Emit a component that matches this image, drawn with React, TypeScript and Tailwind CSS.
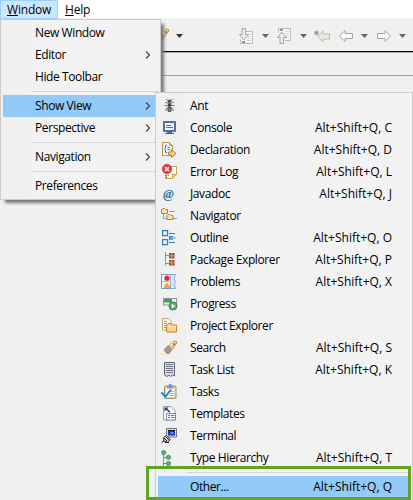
import React from "react";

type Entry = { label: string; keys?: string; sub?: boolean; icon?: React.ReactNode };

const Ic = ({ children }: { children: React.ReactNode }) => (
  <svg width="16" height="16" viewBox="0 0 16 16" className="block shrink-0 overflow-visible">{children}</svg>
);

const Ant = () => (
  <Ic>
    <path d="M6 2.500 4.500 1M9 2.500 10.500 1M6.500 6 4.500 4.500H3M8.500 6l2-1.500H12M6.500 7.500h-4M8.500 7.500h4M6.500 9l-2 1.500-1 2.500M8.500 9l2 1.500 1 2.500" fill="none" stroke="#777" />
    <ellipse cx="7.500" cy="3.300" rx="2" ry="1.700" fill="#555" />
    <ellipse cx="7.500" cy="7" rx="1.800" ry="2" fill="#444" />
    <ellipse cx="7.500" cy="11.500" rx="2.200" ry="2.700" fill="#555" />
    <path d="M7 10.500h1v2H7z" fill="#bbb" />
  </Ic>
);
const Console = () => (
  <Ic>
    <rect x="1" y="1" width="13" height="11" rx="1" fill="#4a72a8" />
    <rect x="3" y="3" width="9" height="7" fill="#f6f8fc" />
    <path d="M4 5.500h5M4 7.500h7" stroke="#5f7194" />
    <path d="M5 12h5v1h2v1H3v-1h2z" fill="#3f659b" />
  </Ic>
);
const Declaration = () => (
  <Ic>
    <path d="M.5.500h7l3 3v10H.500z" fill="#f3f7fd" stroke="#b8964a" />
    <path d="M7.500.500v3h3" fill="#e4c57d" stroke="#b8964a" />
    <path d="M5 3.500H3.500v2.500l-1 1 1 1v2.500H5M5.500 5.500H8M5.500 7.500H8" fill="none" stroke="#477aa8" />
    <path d="M6.500 10h3V7.500l4.500 4-4.500 4V13h-3z" fill="#f7d37d" stroke="#b98535" />
  </Ic>
);
const ErrorLog = () => (
  <Ic>
    <path d="M6.500 2.500h8v8l-4 4h-6v-4" fill="#fbfaf0" stroke="#c0a050" />
    <path d="M10.500 14.500v-4h4" fill="#ecd998" stroke="#c0a050" />
    <circle cx="5" cy="5" r="4.700" fill="#e3303d" stroke="#c9212f" strokeWidth=".6" />
    <path d="m3 3 4 4m0-4L3 7" stroke="#ffd9dc" strokeWidth="1.800" />
    <path d="M3 11h1.500v1H3zM5.500 11H7v1H5.500zM3 13h1.500v1.500H3z" fill="#4a76ae" />
  </Ic>
);
const Javadoc = () => (
  <span className="block w-4 pl-[1px] font-['Liberation_Serif',serif] text-[13px] leading-4 font-bold italic tracking-normal text-[#3474a8]">@</span>
);
const Folder = ({ x, y }: { x: number; y: number }) => (
  <path d={`M${x} ${y + 1}l1-1h2l1 1h2v4h-6z`} fill="#fbe4a8" stroke="#bd8137" />
);
const Navigator = () => (
  <Ic>
    <path d="M1.500 6v4.500H5M7 3.500h6M11 10.500h4" fill="none" stroke="#7da7cd" />
    <Folder x={-0.5} y={0.5} />
    <Folder x={5} y={6.5} />
  </Ic>
);
const Outline = () => (
  <Ic>
    <g fill="#e3f1ff" stroke="#2e7cbb" strokeWidth="1.200">
      <path d="M.600.600h5v5h-5zM.600 9.600h5v5h-5zM7.600 6.600h2.500v2.500H7.600z" />
      <path d="M7 3.500h6M7 12.500h6M11.500 8h2" />
    </g>
  </Ic>
);
const PackageExplorer = () => (
  <Ic>
    <path d="M3.500 0v13.500M3.500 3.500H7M3.500 11.500H7" fill="none" stroke="#8493a2" />
    <path d="M7 1h5.500v5.500H7zM7 8h5.500v5.500H7z" fill="#9b572e" />
    <path d="M7 3.700h5.500M9.700 1v5.500M7 10.700h5.500M9.700 8v5.500" stroke="#e0a871" strokeWidth=".8" />
  </Ic>
);
const Problems = () => (
  <Ic>
    <path d="M-.5.500h9v14h-9z" fill="#eef5ff" stroke="#7894ba" />
    <path d="M8.500.500h5l-1.500 4 1.500 4-1.500 2 1.500 4h-5z" fill="#dbe7f6" stroke="#8aa6ca" />
    <path d="M0 7.500h9" stroke="#a9bdd7" />
    <circle cx="5" cy="4.200" r="2.600" fill="#e12732" />
    <path d="M2 14v-2l3-3.500L8 12v2z" fill="#f3a63c" />
  </Ic>
);
const Progress = () => (
  <Ic>
    <rect x="1.500" y="2.500" width="13" height="6.500" fill="#e9eee8" stroke="#8b9c90" />
    <path d="M2 3h8v3.500H2z" fill="#4a9a5d" />
    <circle cx="11" cy="10" r="4" fill="#5aae70" stroke="#398450" />
    <path d="m9.700 7.700 3.700 2.300-3.700 2.300z" fill="#fff" />
  </Ic>
);
const ProjectExplorer = () => (
  <Ic>
    <path d="M.500.500h6l3 3v8.500h-9z" fill="#f7f5ea" stroke="#b9a877" />
    <path d="M2 3.500h3M2 5.500h3M2 7.500h2M2 9.500h2" stroke="#8ba4be" />
    <path d="M4.500 7.500 6 5.500h3l1 1.500h4.500v7h-10z" fill="#fbd582" stroke="#c08337" />
    <path d="M5.500 8.500h8.500" stroke="#fff0bd" />
  </Ic>
);
const Search = () => (
  <Ic>
    <path d="M-1 14 3 8.500l4.500 4-5 2z" fill="#fff6c4" stroke="#f3d98a" strokeWidth=".6" />
    <path d="m2.500 9 3.500-3 4 3.500-3 4q-4 .5-4.500-4.500z" fill="#a39a98" stroke="#81736c" strokeWidth=".7" />
    <path d="m6.500 6 4.500-4.500q4-1.500 4 1.500L10 9.500z" fill="#f4c677" stroke="#b97c38" strokeWidth=".8" />
    <path d="m8.500 5.500 4-3.500" stroke="#fff0c6" strokeWidth="1.400" />
    <circle cx="12" cy="4" r="1" fill="#45617d" />
  </Ic>
);
const TaskList = () => (
  <Ic>
    <path d="M2.500.500h10v13.500l-2-1-1.700 1.500-1.800-1.500-2 1.500-2.500-1.500z" fill="#d9daeb" stroke="#62636e" />
    <path d="M4 2.500h7M4 4.500h7M4 6.500h7M4 8.500h7M4 10.500h7" stroke="#73758b" />
  </Ic>
);
const Tasks = () => (
  <Ic>
    <rect x="2.500" y="2" width="11.500" height="12.500" rx="1" fill="#e9cfa0" stroke="#ad9468" />
    <path d="M4 4h8.500v9H4z" fill="#f5f9ff" />
    <path d="M5 2h1.500l.5-2h2.500l.500 2h1.500v2.500H5z" fill="#8797ab" />
    <path d="M8 7.500h4M8 9.500h4M7 11.500h5" stroke="#a8b8d2" />
    <path d="m-.5 8.500 4 4L9 5.500" fill="none" stroke="#1e83c8" strokeWidth="2" />
  </Ic>
);
const Templates = () => (
  <Ic>
    <path d="M1.500.500h7.500l4 4v9.500h-11.500z" fill="#f6f9ff" stroke="#8b9db5" />
    <path d="M2.500 5.500v-4h4L5.300 2.700l3 3-1 1-3-3z" fill="#273950" />
    <rect x="4.500" y="7.500" width="9" height="6.500" fill="#fff" stroke="#7490bd" />
    <path d="M6 9.500h2M9 9.500h3.500" stroke="#d44560" />
    <path d="M6 11.500h2M9 11.500h3.500" stroke="#4b9a66" />
  </Ic>
);
const Terminal = () => (
  <Ic>
    <path d="M4.500.500h10v8.500h-10z" fill="#e7e0bd" stroke="#77746a" />
    <path d="M6 2h7v5.500H6z" fill="#1634c9" />
    <path d="M6 2h7v1H6z" fill="#07103c" />
    <path d="M8.500 4h3v2h-3z" fill="#429fea" />
    <path d="m1.500 9.500 3-2 4 4-3 2.500-3.500-.5z" fill="#ddd" stroke="#333" />
    <path d="m-.5 14.500 2.500-2M3.500 8.500l4 4M2 10l3 3M3 14.500h4" stroke="#222" />
  </Ic>
);
const TypeHierarchy = () => (
  <Ic>
    <path d="M1.500 4v12M1.500 7.500h5M1.500 13.500h5" fill="none" stroke="#7d8f9c" />
    <g fill="#5bb077" stroke="#3a8954" strokeWidth=".8">
      <circle cx="1.700" cy="2.500" r="2.100" /><circle cx="6.500" cy="7.300" r="2.100" /><circle cx="6.500" cy="13.500" r="2.100" />
    </g>
  </Ic>
);

const views: Entry[] = [
  { label: "Ant", icon: <Ant /> },
  { label: "Console", keys: "C", icon: <Console /> },
  { label: "Declaration", keys: "D", icon: <Declaration /> },
  { label: "Error Log", keys: "L", icon: <ErrorLog /> },
  { label: "Javadoc", keys: "J", icon: <Javadoc /> },
  { label: "Navigator", icon: <Navigator /> },
  { label: "Outline", keys: "O", icon: <Outline /> },
  { label: "Package Explorer", keys: "P", icon: <PackageExplorer /> },
  { label: "Problems", keys: "X", icon: <Problems /> },
  { label: "Progress", icon: <Progress /> },
  { label: "Project Explorer", icon: <ProjectExplorer /> },
  { label: "Search", keys: "S", icon: <Search /> },
  { label: "Task List", keys: "K", icon: <TaskList /> },
  { label: "Tasks", icon: <Tasks /> },
  { label: "Templates", icon: <Templates /> },
  { label: "Terminal", icon: <Terminal /> },
  { label: "Type Hierarchy", keys: "T", icon: <TypeHierarchy /> },
];

const Item = ({ label, sub, active }: { label: string; sub?: boolean; active?: boolean }) => (
  <div className={`flex h-[22px] items-center pr-[7px] pl-8 ${active ? "bg-[#91c9f7]" : ""}`}>
    <span className="flex-1">{label}</span>
    {sub && (
      <svg width="6" height="8" viewBox="0 0 6 8"><path d="m1 .5 3.500 3.500L1 7.500" fill="none" stroke="#444" strokeWidth="1.200" /></svg>
    )}
  </div>
);

const Rule = () => <div className="ml-7 flex h-[7px] items-center"><div className="h-px w-full bg-[#d4d4d4]" /></div>;

const View = ({ label, keys, icon, active }: Entry & { active?: boolean }) => (
  <div className={`flex h-[22px] items-center pr-[18px] ${active ? "bg-[#91c9f7]" : ""}`}>
    <div className="flex w-8 shrink-0 pl-1">{icon}</div>
    <span className="flex-1">{label}</span>
    {keys && <span className="tracking-normal">Alt+Shift+Q, {keys}</span>}
  </div>
);

const Down = ({ dark }: { dark?: boolean }) => (
  <svg width="7" height="4" viewBox="0 0 7 4"><path d="M0 0h7L3.500 4z" fill={dark ? "#333" : "#666"} /></svg>
);

const Arrow = ({ flip }: { flip?: boolean }) => (
  <svg width="16" height="16" viewBox="0 0 16 16" className={flip ? "-scale-x-100" : ""}>
    <path d="M1.500 8 7 2.500v3h7.500v5H7v3z" fill="#fafafa" stroke="#a6a6a6" strokeLinejoin="round" />
  </svg>
);

export default function App() {
  return (
    <div className="relative h-[500px] w-[413px] overflow-hidden bg-[#f0f0f0] font-['Open_Sans','Noto_Sans',sans-serif] text-[12px] leading-[18px] tracking-[-0.4px] whitespace-nowrap text-black">
      <div className="flex h-[18px] bg-white">
        <div className="flex h-[19px] w-[58px] items-center border border-[#99d1ff] bg-[#cce8ff] pl-[6px] tracking-[-0.2px]"><span><u>W</u>indow</span></div>
        <div className="flex h-[19px] items-center pl-[7px] tracking-[-0.2px]"><span><u>H</u>elp</span></div>
      </div>
      <div className="flex h-[33px] items-center pt-[2px] pl-[154px]">
        <Search />
        <div className="ml-[6px] flex"><Down dark /></div>
        <svg width="16" height="16" viewBox="0 0 16 16" className="ml-14">
          <path d="M5 3.500h8.500v12h-12v-4" fill="#f8f8f8" stroke="#bbb" />
          <path d="M9 6.500h3M9 8.500h3M8 10.500h4M8 12.500h4" stroke="#d5d5d5" />
          <path d="M3 .5h3.500v6h3L4.700 12 .5 6.500H3z" fill="#eeeae0" stroke="#aaa69c" />
          <path d="M3 13h3v2H3z" fill="#8997a8" />
        </svg>
        <div className="ml-[7px] flex"><Down /></div>
        <svg width="16" height="16" viewBox="0 0 16 16" className="ml-2">
          <path d="M1.500 5V.5h12v12H8" fill="#f8f8f8" stroke="#bbb" />
          <path d="M8 3.500h4M8 5.500h4M9 7.500h3M9 9.500h3" stroke="#d5d5d5" />
          <path d="M3 15.500h3.500v-6h3L4.700 4 .5 9.500H3z" fill="#eeeae0" stroke="#aaa69c" />
          <path d="M3 1h3v2H3z" fill="#8997a8" />
        </svg>
        <div className="ml-[7px] flex"><Down /></div>
        <svg width="17" height="16" viewBox="0 0 17 16" className="ml-[7px]">
          <path d="M4 8.500 9 3v3h6.500v5H9v3z" fill="#eeeadd" stroke="#bbb7ab" />
          <path d="M2.500 2.500v5M0 5h5M.700 3.200l3.600 3.600m0-3.600L.700 6.800" stroke="#89919d" />
        </svg>
        <div className="ml-[7px] flex"><Arrow /></div>
        <div className="ml-[7px] flex"><Down /></div>
        <div className="ml-2 flex"><Arrow flip /></div>
        <div className="ml-[7px] flex"><Down /></div>
      </div>
      <div className="h-px bg-black" />
      <div className="h-px bg-[#aaa]" />
      <div className="h-[22px]" />
      <div className="h-px bg-[#a0a0a0]" />

      <div className="absolute top-[19px] left-0 w-[161px] border border-[#ccc] bg-[#f2f2f2] bg-linear-to-r from-[#f0f0f0] from-[30px] to-[#f2f2f2] to-[30px] px-[2px] py-[2px] shadow-[4px_4px_3px_-1px_#777]">
        <Item label="New Window" /><Item label="Editor" sub /><Item label="Hide Toolbar" />
        <Rule />
        <Item label="Show View" sub active /><Item label="Perspective" sub />
        <Rule />
        <Item label="Navigation" sub />
        <Rule />
        <Item label="Preferences" />
      </div>

      <div className="absolute top-[92px] left-[155px] h-[420px] w-[258px] border border-[#ccc] bg-[#f2f2f2] bg-linear-to-r from-[#f0f0f0] from-[30px] to-[#f2f2f2] to-[30px] p-[2px]">
        {views.map((v) => <View key={v.label} {...v} />)}
        <Rule />
        <View label="Other..." keys="Q" active />
      </div>
      <div className="absolute top-[466px] left-[146px] h-[34px] w-[265px] border-[3px] border-[#62a420]" />
    </div>
  );
}
